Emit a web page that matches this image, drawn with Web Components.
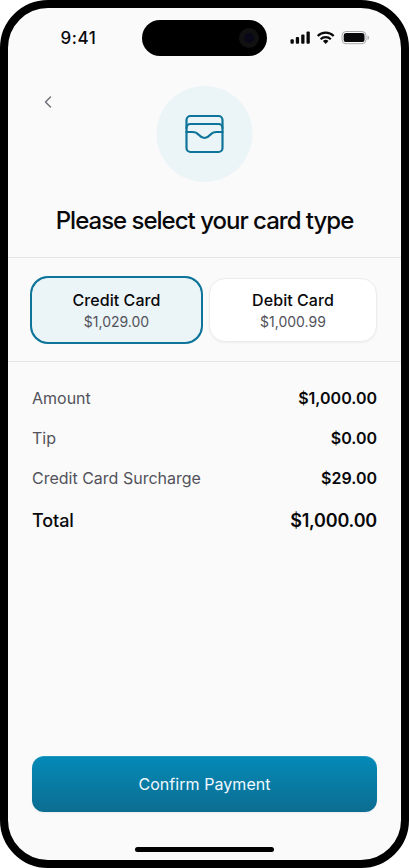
<!DOCTYPE html>
<html lang="en">
<head>
<meta charset="utf-8">
<title>Card payment</title>
<style>
html, body { margin: 0; background: #fff; }
body { font-family: Inter, "Liberation Sans", sans-serif; color: #09090b; width: 409px; height: 868px; overflow: hidden; }
</style>
</head>
<body>
<pay-phone>
  <pay-status slot="status">9:41</pay-status>
  <pay-hero slot="hero">Please select your card type</pay-hero>
  <pay-options slot="main">
    <pay-card selected>Credit Card<span slot="price">$1,029.00</span></pay-card>
    <pay-card>Debit Card<span slot="price">$1,000.99</span></pay-card>
  </pay-options>
  <pay-summary slot="main">
    <pay-row>Amount<span slot="value">$1,000.00</span></pay-row>
    <pay-row>Tip<span slot="value">$0.00</span></pay-row>
    <pay-row>Credit Card Surcharge<span slot="value">$29.00</span></pay-row>
    <pay-row total>Total<span slot="value">$1,000.00</span></pay-row>
  </pay-summary>
  <pay-button slot="footer">Confirm Payment</pay-button>
</pay-phone>
<script>
const define = (name, html) => customElements.define(name, class extends HTMLElement {
  constructor() {
    super();
    this.attachShadow({ mode: 'open' }).innerHTML = html;
  }
});

define('pay-phone', `
<style>
:host { display: flex; flex-direction: column; box-sizing: border-box; width: 409px; height: 868px; border: 8px solid #000; border-radius: 48px; background: #fafafa; overflow: hidden; }
.footer { margin-top: auto; padding: 0 24px 35px; }
.home { flex: none; width: 139px; height: 5px; border-radius: 3px; background: #000; margin: 0 auto 8px; }
</style>
<slot name="status"></slot><slot name="hero"></slot><slot name="main"></slot>
<div class="footer"><slot name="footer"></slot></div><div class="home"></div>`);

define('pay-status', `
<style>
:host { display: grid; grid-template-columns: 134px 125px 134px; height: 60px; box-sizing: border-box; padding-top: 12px; }
.time { padding: 0 0 0 7px; line-height: 36px; text-align: center; font-size: 17px; font-weight: 500; letter-spacing: .6px; }
.island { height: 36px; border-radius: 18px; background: #000; display: flex; align-items: center; justify-content: flex-end; padding-right: 8px; box-sizing: border-box; }
.lens { width: 20px; height: 20px; border-radius: 50%; background: #111112; display: grid; place-items: center; }
.lens i { width: 10px; height: 10px; border-radius: 50%; background: #090818; }
svg { display: block; margin: 9px 0 0 22px; }
</style>
<div class="time"><slot></slot></div>
<div class="island"><div class="lens"><i></i></div></div>
<svg width="82" height="18" viewBox="0 0 82 18" fill="#09090b">
  <rect x="1.5" y="10.2" width="3.3" height="4.6" rx="1"/><rect x="6.8" y="7.9" width="3.3" height="6.9" rx="1"/>
  <rect x="12.2" y="5.4" width="3.3" height="9.4" rx="1"/><rect x="17.5" y="2.5" width="3.3" height="12.3" rx="1"/>
  <g fill="none" stroke="#09090b" stroke-width="2.2"><path d="M28.7 7a11.400 11.400 0 0 1 16 0"/><path d="M31.600 10.200a7.200 7.200 0 0 1 10.200 0"/></g>
  <path d="M33.900 12.100a4 4 0 0 1 5.600 0l-2.800 2.800z"/>
  <rect x="53" y="2.500" width="24" height="12.200" rx="4" fill="none" stroke="#a8a8a9"/>
  <rect x="54.700" y="4.100" width="20.800" height="9" rx="2.600"/><path d="M78.500 6.400v4.500a2.400 2.400 0 0 0 0-4.500z" fill="#aaa"/>
</svg>`);

define('pay-hero', `
<style>
:host { display: grid; grid-template-columns: 148px 97px 148px; align-content: start; height: 190px; box-sizing: border-box; padding-top: 18px; border-bottom: 1px solid #e4e4e7; }
svg { display: block; }
.back { margin: 8px 0 0 32px; }
h1 { grid-column: 1 / -1; margin: 23px 0 0; text-align: center; font-size: 24px; line-height: 32px; font-weight: 500; letter-spacing: -1px; }
</style>
<svg class="back" width="16" height="16" viewBox="0 0 16 16" fill="none" stroke="#71717a" stroke-width="1.5" stroke-linecap="round" stroke-linejoin="round"><path d="M10.500 3 5.500 8l5 5"/></svg>
<svg width="97" height="96" viewBox="0 0 97 96"><circle cx="48.500" cy="48" r="48" fill="#ebf4f6"/><g transform="translate(24.500 24)" fill="none" stroke="#0e7499" stroke-width="2.200" stroke-linecap="round"><rect x="6" y="6" width="36" height="36" rx="4"/><path d="M6 18a4 4 0 0 1 4-4h28a4 4 0 0 1 4 4M6 22h6c3 0 4.600 1 6.200 2.800C20 26.800 21.700 28 24 28s4-1.200 5.800-3.200C31.400 23 33 22 36 22h6"/></g></svg>
<h1><slot></slot></h1>`);

define('pay-options', `
<style>
:host { display: grid; grid-template-columns: 169px 168px; gap: 8px; justify-content: center; box-sizing: border-box; height: 104px; padding: 20px 24px 19px; border-bottom: 1px solid #e4e4e7; }
</style><slot></slot>`);

define('pay-card', `
<style>
:host { display: flex; flex-direction: column; align-items: center; box-sizing: border-box; padding-top: 9px; height: 64px; border: 1px solid #ececee; border-radius: 16px; background: #fff; box-shadow: 0 1px 2px rgba(0,0,0,.05); }
:host([selected]) { border-color: #ebf4f6; background: #ebf4f6; box-shadow: 0 0 0 2px #0e7499; }
b { font-size: 16px; line-height: 24px; font-weight: 500; letter-spacing: .06px; }
small { font-size: 14px; line-height: 20px; color: #52525b; }
</style><b><slot></slot></b><small><slot name="price"></slot></small>`);

define('pay-summary', `
<style>:host { display: flex; flex-direction: column; gap: 16px; padding: 24px 24px 0; }</style><slot></slot>`);

define('pay-row', `
<style>
:host { display: flex; justify-content: space-between; font-size: 16px; line-height: 24px; color: #52525b; }
b { font-weight: 600; color: #09090b; }
:host([total]) { padding-top: 1px; font-size: 18px; line-height: 28px; font-weight: 500; color: #09090b; letter-spacing: -.1px; }
:host([total]) b { letter-spacing: -.2px; }
</style><span><slot></slot></span><b><slot name="value"></slot></b>`);

define('pay-button', `
<style>
:host { display: block; }
button { display: block; width: 100%; height: 56px; border: 0; border-radius: 12px; padding: 0; background: linear-gradient(#048ab8, #0c6d91); box-shadow: inset 0 1px rgba(255,255,255,.12), 0 1px 2px rgba(0,0,0,.06); color: #f0f9ff; font: 400 16px/24px Inter, "Liberation Sans", sans-serif; letter-spacing: .06px; }
</style><button><slot></slot></button>`);
</script>
</body>
</html>
